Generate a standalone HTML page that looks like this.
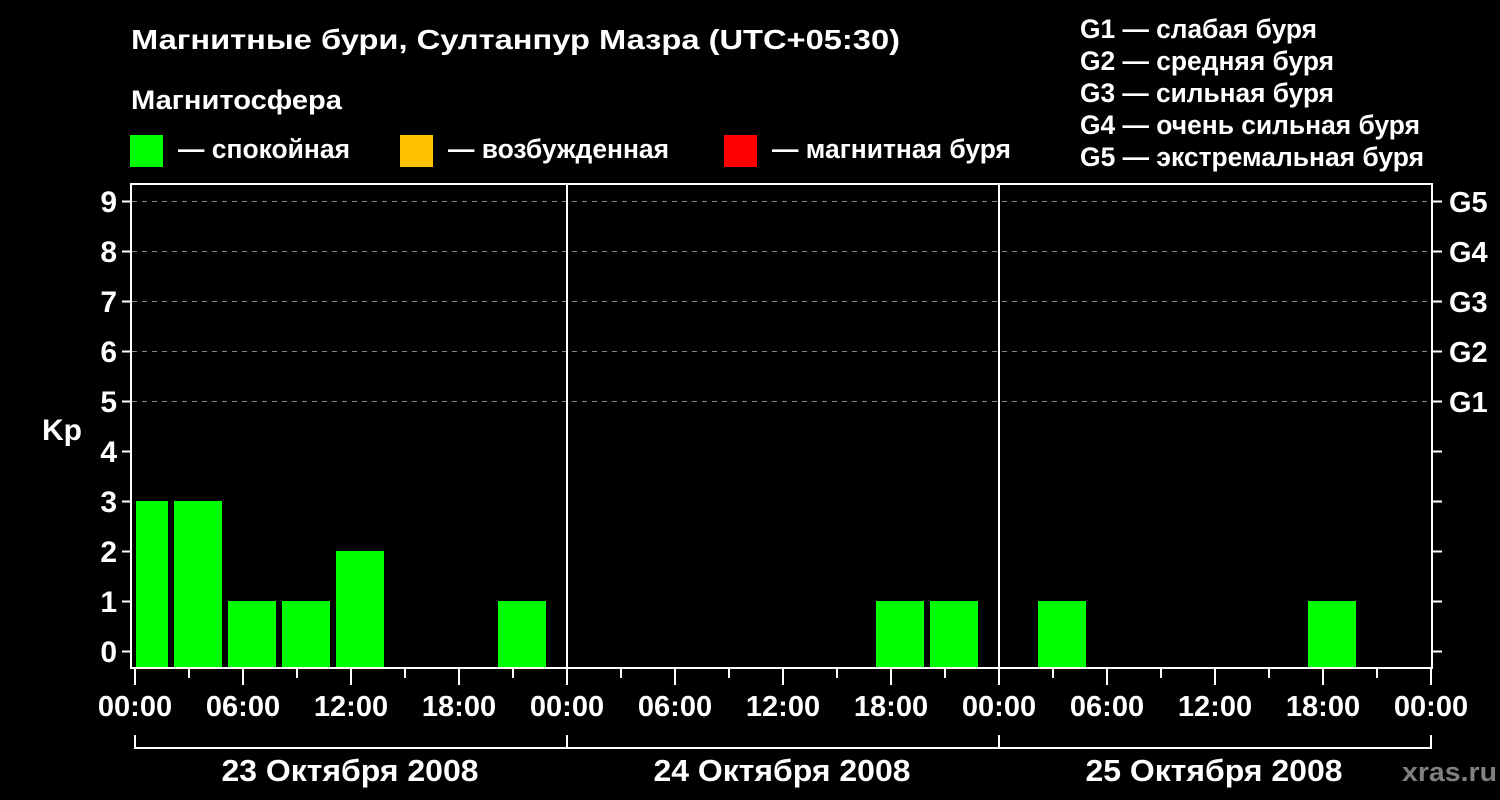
<!DOCTYPE html>
<html><head><meta charset="utf-8"><style>
html,body{margin:0;padding:0;background:#000;}
svg{display:block;}
text{font-family:"Liberation Sans",Arial,sans-serif;font-weight:bold;fill:#fff;}
</style></head><body>
<svg width="1500" height="800" viewBox="0 0 1500 800" xmlns="http://www.w3.org/2000/svg">
<rect width="1500" height="800" fill="#000"/>
<text x="131" y="49" font-size="28" textLength="769" lengthAdjust="spacingAndGlyphs">Магнитные бури, Султанпур Мазра (UTC+05:30)</text>
<text x="131" y="109" font-size="27" textLength="211" lengthAdjust="spacingAndGlyphs">Магнитосфера</text>
<rect x="130" y="135" width="33" height="32" fill="#00ff00"/>
<text x="178" y="158" font-size="27" textLength="172" lengthAdjust="spacingAndGlyphs">— спокойная</text>
<rect x="400" y="135" width="33" height="32" fill="#ffc000"/>
<text x="448" y="158" font-size="27" textLength="221" lengthAdjust="spacingAndGlyphs">— возбужденная</text>
<rect x="724" y="135" width="33" height="32" fill="#ff0000"/>
<text x="772" y="158" font-size="27" textLength="239" lengthAdjust="spacingAndGlyphs">— магнитная буря</text>
<g font-size="27">
<text x="1080" y="38" textLength="237" lengthAdjust="spacingAndGlyphs">G1 — слабая буря</text>
<text x="1080" y="70" textLength="254" lengthAdjust="spacingAndGlyphs">G2 — средняя буря</text>
<text x="1080" y="102" textLength="254" lengthAdjust="spacingAndGlyphs">G3 — сильная буря</text>
<text x="1080" y="134" textLength="340" lengthAdjust="spacingAndGlyphs">G4 — очень сильная буря</text>
<text x="1080" y="166" textLength="344" lengthAdjust="spacingAndGlyphs">G5 — экстремальная буря</text>
</g>
<g stroke="#888" stroke-width="1" stroke-dasharray="5,5">
<line x1="132" y1="201.5" x2="1431" y2="201.5"/>
<line x1="132" y1="251.5" x2="1431" y2="251.5"/>
<line x1="132" y1="301.5" x2="1431" y2="301.5"/>
<line x1="132" y1="351.5" x2="1431" y2="351.5"/>
<line x1="132" y1="401.5" x2="1431" y2="401.5"/>
</g>
<g fill="#00ff00">
<rect x="136" y="501" width="32" height="167"/>
<rect x="174" y="501" width="48" height="167"/>
<rect x="228" y="601" width="48" height="67"/>
<rect x="282" y="601" width="48" height="67"/>
<rect x="336" y="551" width="48" height="117"/>
<rect x="498" y="601" width="48" height="67"/>
<rect x="876" y="601" width="48" height="67"/>
<rect x="930" y="601" width="48" height="67"/>
<rect x="1038" y="601" width="48" height="67"/>
<rect x="1308" y="601" width="48" height="67"/>
</g>
<g stroke="#fff" stroke-width="2" fill="none">
<rect x="131" y="184" width="1301" height="484"/>
<line x1="567" y1="184" x2="567" y2="668"/>
<line x1="999" y1="184" x2="999" y2="668"/>
<path d="M122 201.5h9M122 251.5h9M122 301.5h9M122 351.5h9M122 401.5h9M122 451.5h9M122 501.5h9M122 551.5h9M122 601.5h9M122 651.5h9"/>
<path d="M1432 201.5h10M1432 251.5h10M1432 301.5h10M1432 351.5h10M1432 401.5h10M1432 451.5h10M1432 501.5h10M1432 551.5h10M1432 601.5h10M1432 651.5h10"/>
<path d="M135 668v17M189 668v10M243 668v17M297 668v10M351 668v17M405 668v10M459 668v17M513 668v10M567 668v17M621 668v10M675 668v17M729 668v10M783 668v17M837 668v10M891 668v17M945 668v10M999 668v17M1053 668v10M1107 668v17M1161 668v10M1215 668v17M1269 668v10M1323 668v17M1377 668v10M1431 668v17"/>
<path d="M135 735v13H1431V735M567 735v13M999 735v13"/>
</g>
<g font-size="30" text-anchor="end">
<text x="117" y="212">9</text><text x="117" y="262">8</text><text x="117" y="312">7</text>
<text x="117" y="362">6</text><text x="117" y="412">5</text><text x="117" y="462">4</text>
<text x="117" y="512">3</text><text x="117" y="562">2</text><text x="117" y="612">1</text>
<text x="117" y="662">0</text>
</g>
<g font-size="29">
<text x="1449" y="212">G5</text><text x="1449" y="262">G4</text><text x="1449" y="312">G3</text>
<text x="1449" y="362">G2</text><text x="1449" y="412">G1</text>
</g>
<text x="42" y="440" font-size="30">Kp</text>
<g font-size="29" text-anchor="middle">
<text x="135" y="716">00:00</text><text x="243" y="716">06:00</text><text x="351" y="716">12:00</text><text x="459" y="716">18:00</text>
<text x="567" y="716">00:00</text><text x="675" y="716">06:00</text><text x="783" y="716">12:00</text><text x="891" y="716">18:00</text>
<text x="999" y="716">00:00</text><text x="1107" y="716">06:00</text><text x="1215" y="716">12:00</text><text x="1323" y="716">18:00</text>
<text x="1431" y="716">00:00</text>
</g>
<g font-size="31" text-anchor="middle">
<text x="350" y="781" textLength="257" lengthAdjust="spacingAndGlyphs">23 Октября 2008</text>
<text x="782" y="781" textLength="257" lengthAdjust="spacingAndGlyphs">24 Октября 2008</text>
<text x="1214" y="781" textLength="257" lengthAdjust="spacingAndGlyphs">25 Октября 2008</text>
</g>
<text x="1402" y="781" font-size="27" style="fill:#808080" textLength="95" lengthAdjust="spacingAndGlyphs">xras.ru</text>
</svg>
</body></html>
